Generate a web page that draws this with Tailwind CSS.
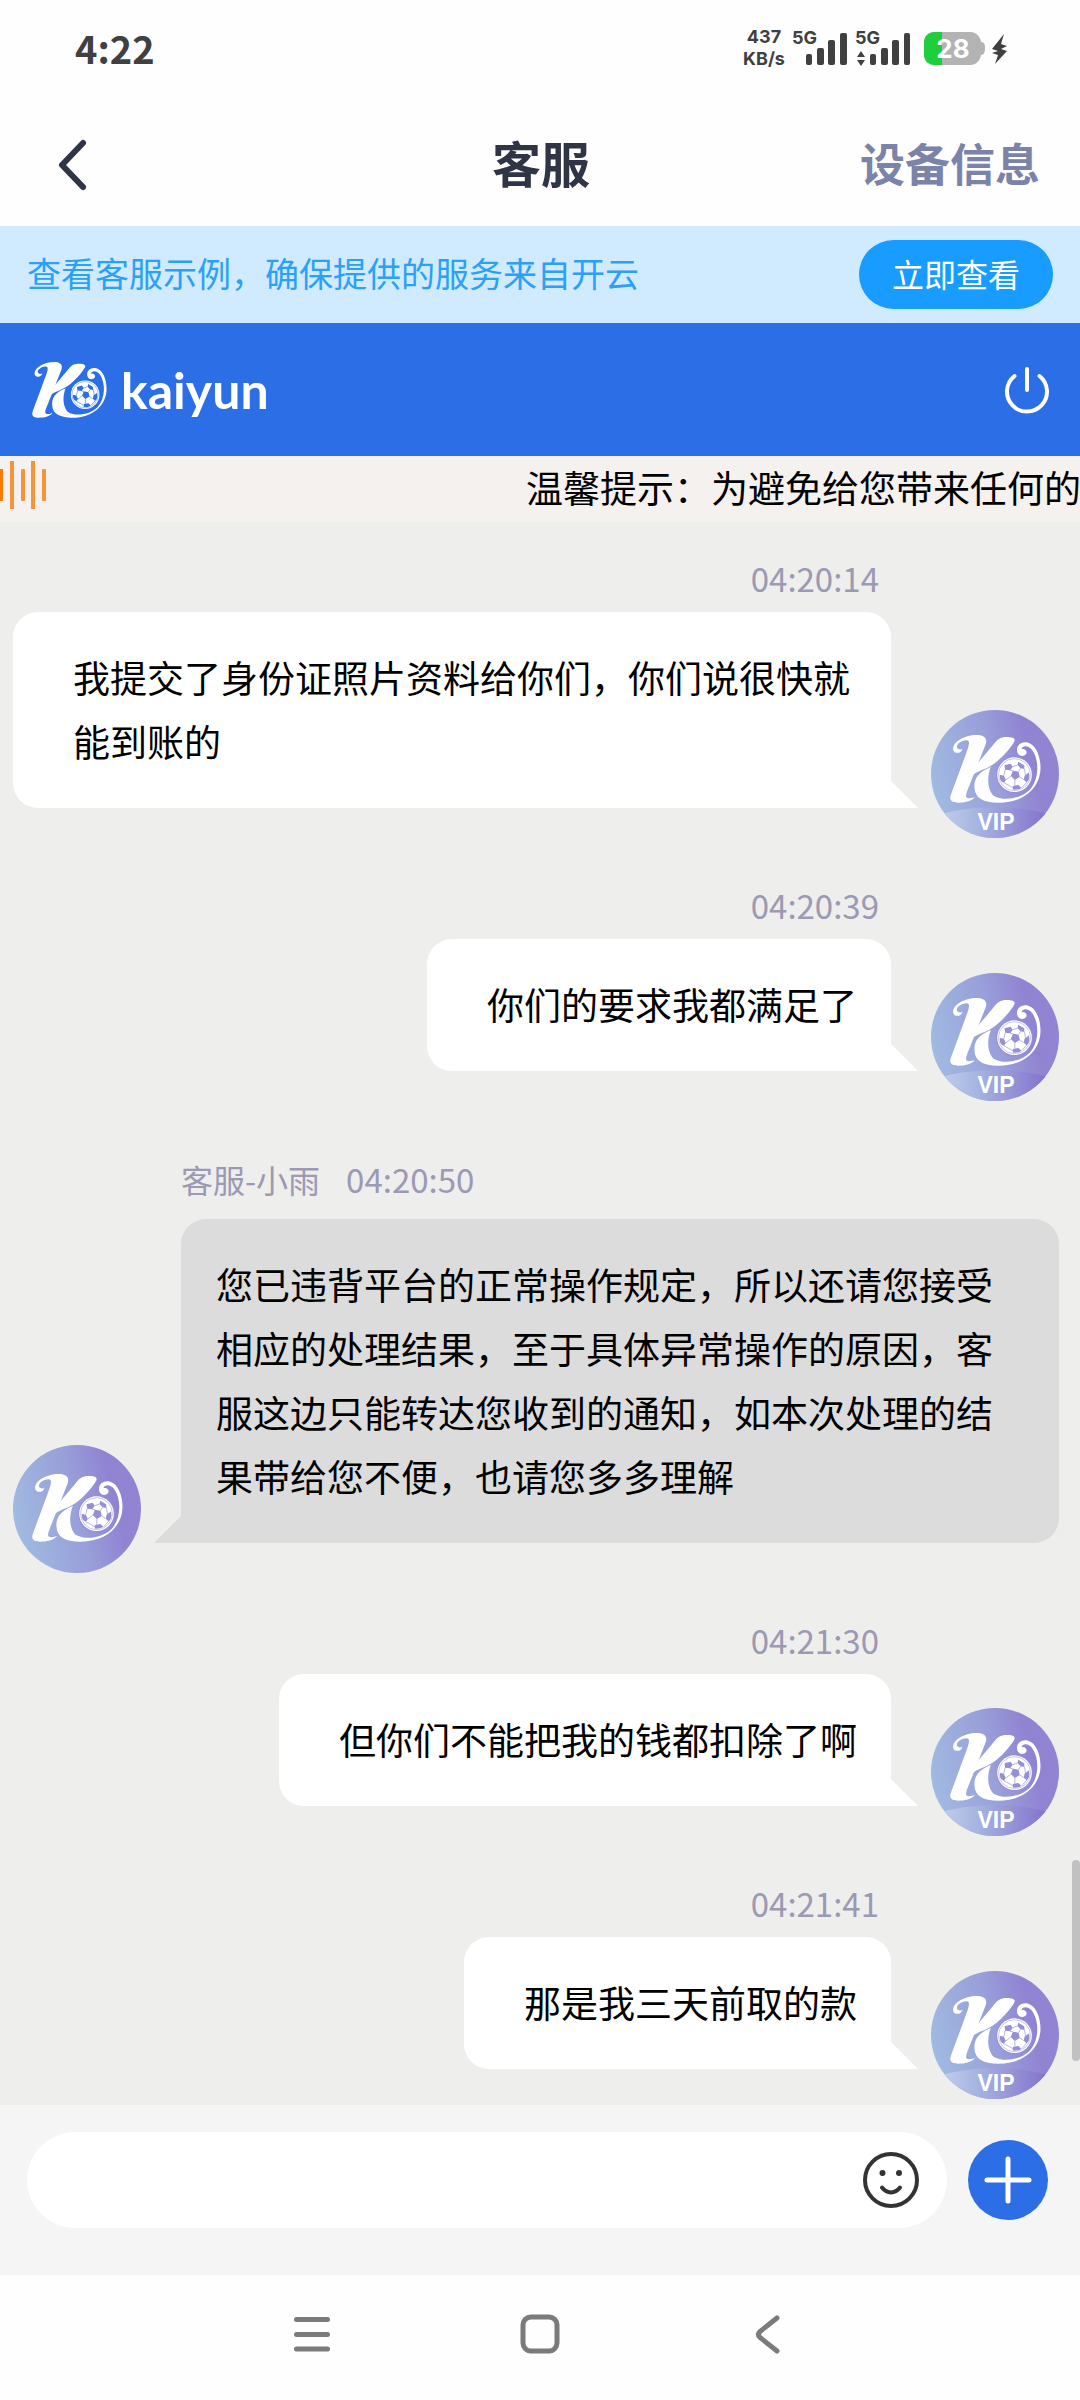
<!DOCTYPE html>
<html lang="zh-CN">
<head>
<meta charset="utf-8">
<meta name="viewport" content="width=device-width, initial-scale=1">
<title>客服</title>
<script src="https://cdn.jsdelivr.net/npm/@tailwindcss/browser@4"></script>
</head>
<body class="flex min-h-screen flex-col bg-[#fefefe] font-['Noto_Sans_CJK_SC',sans-serif] text-black">

<!-- Shared symbols -->
<svg class="absolute size-0" aria-hidden="true">
  <defs>
    <linearGradient id="disc" x1="0" y1=".62" x2="1" y2=".38">
      <stop offset="0" stop-color="#a0bbe1"/><stop offset=".5" stop-color="#989fd9"/><stop offset=".8" stop-color="#9083d2"/><stop offset="1" stop-color="#9384d3"/>
    </linearGradient>
    <linearGradient id="band" x1="0" y1="0" x2="1" y2="0">
      <stop offset=".12" stop-color="#c8d6ef"/><stop offset=".4" stop-color="#a5b4e0"/><stop offset=".78" stop-color="#8576ce"/><stop offset="1" stop-color="#9282d2"/>
    </linearGradient>
    <clipPath id="round"><circle cx="64" cy="64" r="64"/></clipPath>
    <clipPath id="ballclip"><circle cx="193" cy="119" r="45"/></clipPath>
  </defs>
  <symbol id="mark" viewBox="0 0 272 204">
    <g fill="#fff" transform="translate(-210 -137)">
      <path d="M247 178C243 193 226 194 220 184C212 164 246 137 290 137C314 137 323 149 316 166L268 288C260 308 252 324 263 326C270 328 278 325 285 323C273 336 253 340 235 340C213 340 206 331 213 314L258 192C266 170 272 152 258 153C240 154 227 167 231 176C236 181 242 182 247 178Z"/>
      <path d="M272 246L338 168C351 150 360 143 380 143C400 143 409 148 400 161C381 190 347 226 313 239C295 246 280 252 262 268Z"/>
      <path d="M332 233C320 262 321 300 340 319C368 336 420 330 449 301C476 271 479 214 456 182C444 166 426 168 424 180C431 177 441 182 439 192C433 204 414 202 411 187C407 168 425 155 444 160C467 166 481 200 481 235C481 291 435 340 355 340C309 340 284 325 283 295C281 270 292 249 332 233Z"/>
    </g>
    <circle cx="193" cy="119" r="55" fill="currentColor"/>
    <circle cx="193" cy="119" r="52" fill="#fff"/>
    <circle cx="193" cy="119" r="48" fill="none" stroke="currentColor" stroke-width="1.5"/>
    <g fill="currentColor" clip-path="url(#ballclip)">
      <path d="M188 107L205 110L209 126L194 135L182 123Z"/>
      <path d="M163 91L181 86L188 95L180 106L165 104ZM204 80L222 91L223 102L211 100L202 90ZM223 122L237 112L241 133L229 142L221 134ZM188 153L205 150L214 159L203 168L188 165ZM148 119L161 122L167 135L161 143L148 136Z"/>
      <path fill="none" stroke="currentColor" stroke-width="2" d="M188 107L180 106M205 110L211 100M209 126L221 134M194 135L194 152M182 123L167 135M188 95L202 90M223 102L226 120M229 142L214 159M188 158L161 143M161 122L165 104"/>
    </g>
  </symbol>
  <symbol id="avatar" viewBox="0 0 128 128">
    <circle cx="64" cy="64" r="64" fill="url(#disc)"/>
    <use href="#mark" x="19" y="29" width="91" height="68"/>
  </symbol>
  <symbol id="avatar-vip" viewBox="0 0 128 128">
    <circle cx="64" cy="64" r="64" fill="url(#disc)"/>
    <use href="#mark" x="19" y="25" width="91" height="68"/>
    <ellipse cx="64" cy="130" rx="86" ry="33" fill="url(#band)" clip-path="url(#round)"/>
  </symbol>
</svg>

<!-- Status bar -->
<div class="flex h-[104px] items-center justify-between pr-[72px] pb-2 pl-[75px] text-[#404040]">
  <span class="text-[38px] leading-10 font-bold">4:22</span>
  <div class="flex items-center font-['Inter',sans-serif]">
    <div class="w-12 text-center text-[18px] leading-[22px] font-bold"><div>437</div><div>KB/s</div></div>
    <svg class="ml-1 h-12 w-[216px]" viewBox="792 24 216 48" fill="#404040" font-weight="700">
      <text x="792" y="44" font-size="18">5G</text>
      <rect x="806" y="54" width="6" height="11" rx="2"/><rect x="817" y="48" width="7" height="17" rx="2"/><rect x="828" y="40" width="7" height="25" rx="2"/><rect x="840" y="33" width="7" height="32" rx="2"/>
      <text x="855" y="44" font-size="18">5G</text>
      <path d="M857 57h8l-4-6zM857 60h8l-4 6z"/>
      <rect x="870" y="54" width="6" height="11" rx="2"/><rect x="881" y="48" width="7" height="17" rx="2"/><rect x="892" y="40" width="7" height="25" rx="2"/><rect x="904" y="33" width="6" height="32" rx="2"/>
      <rect x="924" y="32" width="57" height="33" rx="11" fill="#b3b3b3"/>
      <path d="M981 42c3 0 4 2 4 6s-1 7-4 7z" fill="#b3b3b3"/>
      <path d="M942 32h-7c-7 0-11 4-11 11v11c0 7 4 11 11 11h7z" fill="#1fce3c"/>
      <text x="953" y="58" font-size="26" fill="#fff" text-anchor="middle">28</text>
      <path d="M1004 34L992 49L998 51L992 53L998 55L995 64L1007 51L1001 49L1007 46L1001 44Z"/>
    </svg>
  </div>
</div>

<!-- Title bar -->
<header class="grid h-[122px] grid-cols-3 items-center pr-10 pl-[54px]">
  <button type="button" aria-label="返回" class="size-14 justify-self-start">
    <svg class="h-14 w-9" viewBox="0 0 36 56" fill="none" stroke="#2f3447" stroke-width="6" stroke-linecap="round" stroke-linejoin="round"><path d="M29 6L8 28L29 50"/></svg>
  </button>
  <h1 class="-ml-3 pb-1.5 text-center text-[49px] leading-[64px] font-bold text-[#2f3447]">客服</h1>
  <a href="#" class="justify-self-end pb-1 text-[45px] leading-[64px] font-bold text-[#7b83a9]">设备信息</a>
</header>

<!-- Notice banner -->
<div class="flex h-[97px] items-center justify-between bg-[#d0ebff] pr-[27px] pl-[27px]">
  <p class="pb-1 text-[34px] leading-12 text-[#2ba0f8]">查看客服示例，确保提供的服务来自开云</p>
  <button type="button" class="h-[69px] w-[194px] rounded-full bg-[#189cff] pb-1 text-[32px] leading-12 text-white">立即查看</button>
</div>

<!-- Brand bar -->
<div class="flex h-[133px] items-center justify-between bg-[#2b6ee6] pr-7 pl-8 text-[#2b6ee6]">
  <div class="flex items-center gap-[14px]">
    <svg class="h-14 w-[75px]" role="img" aria-label="Kaiyun"><use href="#mark"/></svg>
    <span class="font-['Lato',sans-serif] text-[50px] leading-14 font-bold text-white">kaiyun</span>
  </div>
  <button type="button" aria-label="退出" class="size-[50px]">
    <svg class="size-[50px]" viewBox="0 0 50 50" fill="none" stroke="#fff" stroke-width="4" stroke-linecap="round"><path d="M25 4V25M12.500 11A20 20 0 1 0 37.500 11"/></svg>
  </button>
</div>

<!-- Scrolling tip -->
<div class="flex h-[66px] items-center overflow-hidden bg-[#f4f1ee]">
  <svg class="mb-2 h-12 w-12 shrink-0" viewBox="0 0 48 48" fill="#f5943b"><rect x="-1" y="8" width="4" height="32" rx="1" fill="#ff7a00"/><rect x="10" y="0" width="4" height="48"/><rect x="21" y="8" width="4" height="32" rx="1"/><rect x="31" y="0" width="4" height="48"/><rect x="42" y="8" width="4" height="32" rx="1"/></svg>
  <p class="flex-1 overflow-hidden pb-1 pl-[478px] text-[37px] leading-[60px] whitespace-nowrap">温馨提示：为避免给您带来任何的</p>
</div>

<!-- Conversation -->
<main class="relative flex-1 bg-[#eeeeec] pt-[36px] pr-[21px] pb-1.5 pl-[13px]">
  <article class="flex items-end justify-end gap-10">
    <div class="mb-[30px] flex flex-col items-end gap-[14px]">
      <time class="pr-3 text-[33px] leading-10 text-[#9c99b3]">04:20:14</time>
      <div class="relative rounded-[25px] rounded-br-none bg-white pt-[33px] pr-[34px] pb-[35px] pl-[60px]">
        <p class="text-[37px] leading-[64px]">我提交了身份证照片资料给你们，你们说很快就能到账的</p>
        <svg class="absolute bottom-0 left-full size-[27px]" viewBox="0 0 27 27" fill="#fff"><path d="M0 0L27 27H0Z"/></svg>
      </div>
    </div>
    <svg class="size-32 shrink-0 text-[#958fd5]" viewBox="0 0 128 128"><use href="#avatar-vip"/><text x="65" y="120" class="fill-white font-['Liberation_Sans',sans-serif] text-[23px] font-bold" text-anchor="middle">VIP</text></svg>
  </article>

  <article class="mt-[47px] flex items-end justify-end gap-10">
    <div class="mb-[30px] flex flex-col items-end gap-[14px]">
      <time class="pr-3 text-[33px] leading-10 text-[#9c99b3]">04:20:39</time>
      <div class="relative rounded-[25px] rounded-br-none bg-white pt-[33px] pr-[34px] pb-[35px] pl-[60px]">
        <p class="text-[37px] leading-[64px]">你们的要求我都满足了</p>
        <svg class="absolute bottom-0 left-full size-[27px]" viewBox="0 0 27 27" fill="#fff"><path d="M0 0L27 27H0Z"/></svg>
      </div>
    </div>
    <svg class="size-32 shrink-0 text-[#958fd5]" viewBox="0 0 128 128"><use href="#avatar-vip"/><text x="65" y="120" class="fill-white font-['Liberation_Sans',sans-serif] text-[23px] font-bold" text-anchor="middle">VIP</text></svg>
  </article>

  <article class="mt-[58px] flex items-end gap-10">
    <svg class="size-32 shrink-0 text-[#958fd5]"><use href="#avatar"/></svg>
    <div class="mb-[30px] flex flex-1 flex-col gap-5">
      <div class="flex gap-[26px] leading-10 text-[#9c99b3]"><span class="text-[32px]">客服-小雨</span><time class="text-[33px]">04:20:50</time></div>
      <div class="relative rounded-[25px] rounded-bl-none bg-[#dcdcdc] px-[35px] pt-[33px] pb-[35px]">
        <p class="text-[37px] leading-[64px]">您已违背平台的正常操作规定，所以还请您接受相应的处理结果，至于具体异常操作的原因，客服这边只能转达您收到的通知，如本次处理的结果带给您不便，也请您多多理解</p>
        <svg class="absolute right-full bottom-0 size-[27px]" viewBox="0 0 27 27" fill="#dcdcdc"><path d="M27 0L0 27H27Z"/></svg>
      </div>
    </div>
  </article>

  <article class="mt-[47px] flex items-end justify-end gap-10">
    <div class="mb-[30px] flex flex-col items-end gap-[14px]">
      <time class="pr-3 text-[33px] leading-10 text-[#9c99b3]">04:21:30</time>
      <div class="relative rounded-[25px] rounded-br-none bg-white pt-[33px] pr-[34px] pb-[35px] pl-[60px]">
        <p class="text-[37px] leading-[64px]">但你们不能把我的钱都扣除了啊</p>
        <svg class="absolute bottom-0 left-full size-[27px]" viewBox="0 0 27 27" fill="#fff"><path d="M0 0L27 27H0Z"/></svg>
      </div>
    </div>
    <svg class="size-32 shrink-0 text-[#958fd5]" viewBox="0 0 128 128"><use href="#avatar-vip"/><text x="65" y="120" class="fill-white font-['Liberation_Sans',sans-serif] text-[23px] font-bold" text-anchor="middle">VIP</text></svg>
  </article>

  <article class="mt-[47px] flex items-end justify-end gap-10">
    <div class="mb-[30px] flex flex-col items-end gap-[14px]">
      <time class="pr-3 text-[33px] leading-10 text-[#9c99b3]">04:21:41</time>
      <div class="relative rounded-[25px] rounded-br-none bg-white pt-[33px] pr-[34px] pb-[35px] pl-[60px]">
        <p class="text-[37px] leading-[64px]">那是我三天前取的款</p>
        <svg class="absolute bottom-0 left-full size-[27px]" viewBox="0 0 27 27" fill="#fff"><path d="M0 0L27 27H0Z"/></svg>
      </div>
    </div>
    <svg class="size-32 shrink-0 text-[#958fd5]" viewBox="0 0 128 128"><use href="#avatar-vip"/><text x="65" y="120" class="fill-white font-['Liberation_Sans',sans-serif] text-[23px] font-bold" text-anchor="middle">VIP</text></svg>
  </article>

  <div class="absolute right-0 bottom-11 h-[201px] w-2 rounded-full bg-[#c1c1c1]"></div>
</main>

<!-- Composer -->
<form class="flex h-[170px] items-start gap-[21px] bg-[#f5f5f5] pt-[27px] pr-8 pl-[27px]">
  <div class="flex h-24 flex-1 items-center rounded-full bg-white pr-7 pl-10">
    <input type="text" aria-label="消息" class="h-16 min-w-0 flex-1 bg-transparent text-[37px] outline-none">
    <button type="button" aria-label="表情" class="size-14">
      <svg class="size-14" viewBox="0 0 56 56" fill="none" stroke="#333" stroke-width="4" stroke-linecap="round"><circle cx="28" cy="28" r="26"/><path d="M19 35.500C24 42 32 42 37 35.500"/><circle cx="19.500" cy="21" r="3" fill="#333" stroke="none"/><circle cx="36" cy="21" r="3" fill="#333" stroke="none"/></svg>
    </button>
  </div>
  <button type="button" aria-label="更多" class="mt-2 size-20 rounded-full bg-[#2b6ee6]">
    <svg class="size-20" viewBox="0 0 80 80" stroke="#fff" stroke-width="5" stroke-linecap="round"><path d="M40 19V61M19 40H61"/></svg>
  </button>
</form>

<!-- System navigation -->
<nav class="flex h-[126px] items-center justify-center pb-2">
  <button type="button" aria-label="菜单" class="flex w-[228px] justify-center">
    <svg class="size-10" viewBox="0 0 40 40" stroke="#7b7b7b" stroke-width="5" stroke-linecap="round"><path d="M4.500 5.500H35.500M4.500 20.500H35.500M4.500 35H35.500"/></svg>
  </button>
  <button type="button" aria-label="主页" class="flex w-[228px] justify-center">
    <svg class="size-10" viewBox="0 0 40 40" fill="none" stroke="#7b7b7b" stroke-width="5"><rect x="3" y="3" width="34" height="34" rx="8"/></svg>
  </button>
  <button type="button" aria-label="后退" class="flex w-[228px] justify-center">
    <svg class="size-10" viewBox="0 0 40 40" fill="none" stroke="#7b7b7b" stroke-width="5" stroke-linecap="round"><path d="M29 4L12 17.500Q9 20.500 12 23.500L29 37"/></svg>
  </button>
</nav>
</body>
</html>
